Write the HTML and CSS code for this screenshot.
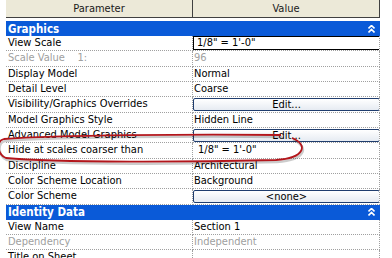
FILE: index.html
```html
<!DOCTYPE html>
<html lang="en">
<head>
    <meta charset="UTF-8">
    <title>View Properties</title>
    <link rel="stylesheet" href="styles.css">
</head>
<body>
    <div class="props">
        <div class="head">
            <div class="head-cell">Parameter</div>
            <div class="head-cell">Value</div>
        </div>

        <!-- Graphics group -->
        <div class="group">
            <span>Graphics</span>
            <svg class="chev" width="7" height="8" viewBox="0 0 7 8"><path d="M0.5 3.5 L3.5 0.5 L6.5 3.5 M0.5 7.5 L3.5 4.5 L6.5 7.5" fill="none" stroke="#fff" stroke-width="1.6"/></svg>
        </div>
        <div class="row">
            <div class="name">View Scale</div>
            <div class="val"><div class="field">1/8" = 1'-0"</div></div>
        </div>
        <div class="row dim">
            <div class="name">Scale Value &nbsp;&nbsp; 1:</div>
            <div class="val">96</div>
        </div>
        <div class="row">
            <div class="name">Display Model</div>
            <div class="val">Normal</div>
        </div>
        <div class="row">
            <div class="name">Detail Level</div>
            <div class="val">Coarse</div>
        </div>
        <div class="row">
            <div class="name">Visibility/Graphics Overrides</div>
            <div class="val"><div class="btn">Edit...</div></div>
        </div>
        <div class="row">
            <div class="name">Model Graphics Style</div>
            <div class="val">Hidden Line</div>
        </div>
        <div class="row">
            <div class="name">Advanced Model Graphics</div>
            <div class="val"><div class="btn">Edit...</div></div>
        </div>
        <div class="row">
            <div class="name">Hide at scales coarser than</div>
            <div class="val indent">1/8" = 1'-0"</div>
        </div>
        <div class="row">
            <div class="name">Discipline</div>
            <div class="val">Architectural</div>
        </div>
        <div class="row">
            <div class="name">Color Scheme Location</div>
            <div class="val">Background</div>
        </div>
        <div class="row">
            <div class="name">Color Scheme</div>
            <div class="val"><div class="btn">&lt;none&gt;</div></div>
        </div>

        <!-- Identity group -->
        <div class="group">
            <span>Identity Data</span>
            <svg class="chev" width="7" height="8" viewBox="0 0 7 8"><path d="M0.5 3.5 L3.5 0.5 L6.5 3.5 M0.5 7.5 L3.5 4.5 L6.5 7.5" fill="none" stroke="#fff" stroke-width="1.6"/></svg>
        </div>
        <div class="row">
            <div class="name">View Name</div>
            <div class="val">Section 1</div>
        </div>
        <div class="row dim">
            <div class="name">Dependency</div>
            <div class="val">Independent</div>
        </div>
        <div class="row">
            <div class="name">Title on Sheet</div>
            <div class="val"></div>
        </div>
    </div>

    <!-- red markup loop drawn over the table -->
    <svg class="markup" width="320" height="40" viewBox="0 0 320 40">
        <path d="M285 5 C 200 4, 60 5, 8 9 C 0 11, 1 24, 10 28 C 60 33, 200 32, 280 30 C 310 28, 312 14, 296 8" fill="none" stroke="rgba(0,0,0,0.2)" stroke-width="2.5" transform="translate(1,2)"/>
        <path d="M285 5 C 200 4, 60 5, 8 9 C 0 11, 1 24, 10 28 C 60 33, 200 32, 280 30 C 310 28, 312 14, 296 8" fill="none" stroke="#b3161c" stroke-width="1.8"/>
    </svg>
</body>
</html>
```

FILE: styles.css
```css
body {
    margin: 0;
    background: #fff;
    font-family: "DejaVu Sans Condensed", "Liberation Sans", sans-serif;
    font-size: 11px;
    color: #000;
}
.props {
    width: 374px;
    margin-left: 6px;
}
.head {
    display: grid;
    grid-template-columns: 187px 187px;
    height: 18px;
    margin-bottom: 3px;
}
.head-cell {
    background: #ece9d8;
    border-right: 1px solid #404040;
    border-bottom: 1px solid #404040;
    text-align: center;
    line-height: 17px;
    color: #1a1a1a;
}
.group {
    display: flex;
    justify-content: space-between;
    align-items: center;
    height: 15px;
    padding: 0 5px 0 2px;
    background: #0a5ad8;
    color: #fff;
    font-weight: bold;
    font-size: 11.5px;
}
.chev {
    display: block;
}
.row {
    display: grid;
    grid-template-columns: 187px 187px;
    height: 15.33px;
}
.name, .val {
    border-bottom: 1px dotted #a0a0a0;
    border-right: 1px dotted #a0a0a0;
    line-height: 14px;
    white-space: nowrap;
    overflow: hidden;
}
.name {
    padding-left: 2px;
}
.val {
    padding-left: 1px;
}
.val.indent {
    padding-left: 5px;
}
.dim .name, .dim .val {
    color: #a0a0a0;
}
.field {
    height: 12px;
    line-height: 12px;
    margin-right: -1px;
    margin-left: -1px;
    padding-left: 3px;
    border: 1px solid #000;
    background: #fff;
}
.btn {
    height: 11px;
    line-height: 11px;
    margin: 1px -1px 0 -1px;
    border: 1px solid #1f3d6e;
    border-radius: 2px;
    background: linear-gradient(#ffffff, #e6ebf2);
    text-align: center;
}
.markup {
    position: absolute;
    left: -4px;
    top: 130px;
}
```
